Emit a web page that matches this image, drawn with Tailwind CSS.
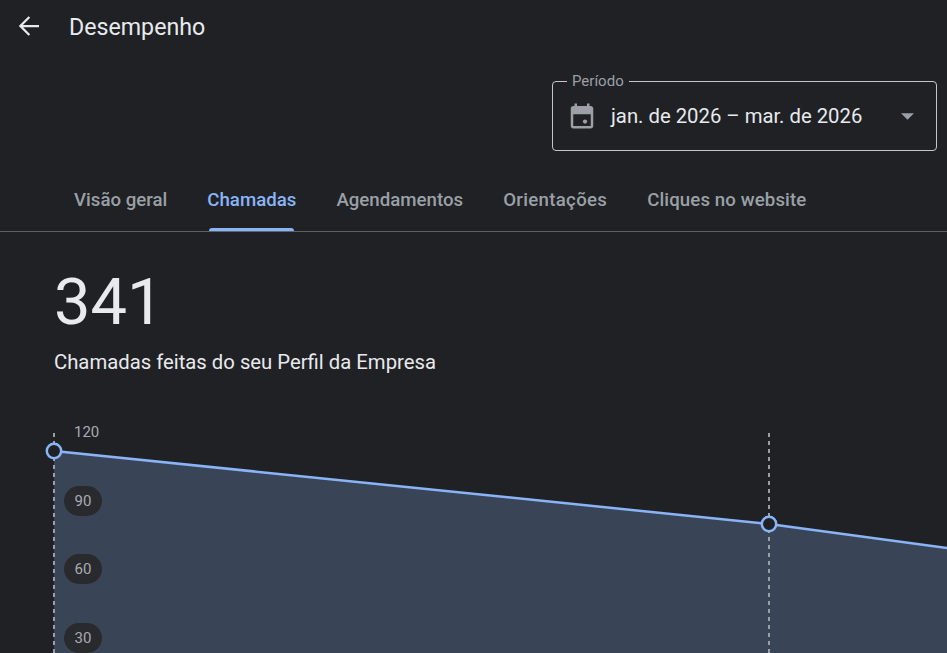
<!DOCTYPE html>
<html lang="pt">
<head>
<meta charset="utf-8">
<script src="https://cdn.jsdelivr.net/npm/@tailwindcss/browser@4"></script>
</head>
<body class="w-[947px] h-[653px] overflow-hidden bg-[#1f2125] font-['Roboto',sans-serif] text-[#e8eaed]">
<header class="flex items-center h-[52px] pl-[14px]">
  <svg class="w-[30px] h-[30px] shrink-0" viewBox="0 0 24 24" fill="none" stroke="#e8eaed" stroke-width="1.800"><path d="M20 12H5.500M12.300 4.800 5.100 12l7.200 7.200"/></svg>
  <h1 class="ml-[25px] pt-[1px] text-[23.200px] leading-7 font-normal">Desempenho</h1>
</header>
<div class="flex justify-end pr-[10px] pt-[29px]">
  <div class="relative w-[385px] h-[70px] border border-[#c4c7c9] rounded-[4px] flex items-center pl-[14px] pr-[22px]">
    <span class="absolute -top-[9px] left-[14px] px-[5px] bg-[#1f2125] text-[15px] leading-4 text-[#9aa0a6]">Período</span>
    <svg class="w-[30px] h-[30px] shrink-0" viewBox="0 0 24 24" fill="#9aa0a6"><path d="M19 4h-1V2h-2v2H8V2H6v2H5c-1.100 0-2 .9-2 2v14c0 1.100.9 2 2 2h14c1.100 0 2-.9 2-2V6c0-1.100-.9-2-2-2zm0 16H5v-9.500h14V20z"/><circle cx="14.400" cy="16.400" r="1.700"/></svg>
    <span class="ml-[14px] text-[20.300px] leading-6 text-[#e8eaed] whitespace-nowrap">jan. de 2026 – mar. de 2026</span>
    <svg class="ml-auto w-[13px] h-[7px]" viewBox="0 0 14 7" fill="#9aa0a6"><path d="M0 0h14L7 7z"/></svg>
  </div>
</div>
<nav class="flex h-[81px] pl-[54px] border-b border-[#5f6368] text-[18.670px] font-medium text-[#9aa0a6]">
  <a class="px-5 pt-[37px] leading-6">Visão geral</a>
  <a class="relative px-5 pt-[37px] leading-6 text-[#8ab4f8]">Chamadas<span class="absolute left-[22px] right-[22px] bottom-0 h-[3px] rounded-t-[3px] bg-[#8ab4f8]"></span></a>
  <a class="px-5 pt-[37px] leading-6">Agendamentos</a>
  <a class="px-5 pt-[37px] leading-6 tracking-[0.3px]">Orientações</a>
  <a class="px-5 pt-[37px] leading-6 tracking-[0.1px]">Cliques no website</a>
</nav>
<section class="pl-[54px] pt-[34px]">
  <div class="text-[65px] leading-[72px] font-normal">341</div>
  <p class="mt-[12px] text-[20.300px] leading-6 text-[#e8eaed]">Chamadas feitas do seu Perfil da Empresa</p>
</section>
<div class="relative mt-[46px] h-[233px] w-[947px]">
  <svg class="absolute inset-0" width="947" height="233" viewBox="0 420 947 233">
    <path d="M54 451 L769 524 L947 548 V653 H54Z" fill="#394556"/>
    <path d="M54 433V653M769 433V653" stroke="#9aa0a6" stroke-width="2" stroke-dasharray="4 4" fill="none"/>
    <path d="M54 451 L769 524 L947 548" stroke="#8ab4f8" stroke-width="2.500" fill="none"/>
    <circle cx="54" cy="451" r="7.200" fill="#1f2125" stroke="#8ab4f8" stroke-width="2.500"/>
    <circle cx="769" cy="524" r="7.200" fill="#1f2125" stroke="#8ab4f8" stroke-width="2.500"/>
  </svg>
  <span class="absolute left-[74px] top-[4px] text-[15px] leading-4 text-[#a8abb0]">120</span>
  <span class="absolute left-[64px] top-[66px] w-[38px] h-[30px] rounded-full bg-[#292a2d] flex items-center justify-center text-[15px] text-[#a8abb0]">90</span>
  <span class="absolute left-[64px] top-[134px] w-[38px] h-[30px] rounded-full bg-[#292a2d] flex items-center justify-center text-[15px] text-[#a8abb0]">60</span>
  <span class="absolute left-[64px] top-[203px] w-[38px] h-[30px] rounded-full bg-[#292a2d] flex items-center justify-center text-[15px] text-[#a8abb0]">30</span>
</div>
</body>
</html>
